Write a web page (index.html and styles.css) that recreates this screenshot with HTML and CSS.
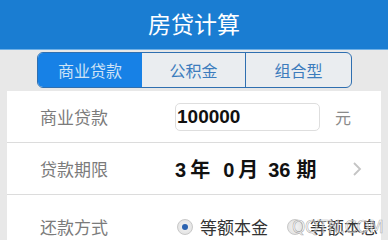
FILE: index.html
```html
<!DOCTYPE html>
<html lang="zh-CN">
<head>
<meta charset="utf-8">
<title>房贷计算</title>
<link rel="stylesheet" href="styles.css">
</head>
<body>
<header class="topbar"><h1 class="title">房贷计算</h1></header>
<nav class="tabs">
  <div class="tab tab-active">商业贷款</div>
  <div class="tab tab-mid">公积金</div>
  <div class="tab tab-last">组合型</div>
</nav>
<section class="card">
  <div class="row">
    <div class="label">商业贷款</div>
    <div class="value">
      <div class="input">100000</div>
      <span class="unit">元</span>
    </div>
  </div>
  <div class="row">
    <div class="label">贷款期限</div>
    <div class="value">
      <span class="term"><span class="n">3</span><span class="u u-year">年</span><span class="n">0</span><span class="u u-month">月</span><span class="n">36</span><span class="u u-period">期</span></span>
      <svg class="chev" width="10" height="16" viewBox="0 0 10 16"><polyline points="2,2 8,8 2,14" fill="none" stroke="#c4c4c4" stroke-width="1.8"/></svg>
    </div>
  </div>
  <div class="row row-last">
    <div class="label">还款方式</div>
    <div class="value radios">
      <span class="radio radio-on"></span><span class="opt">等额本金</span>
      <span class="radio radio-off"></span><span class="opt">等额本息</span>
    </div>
  </div>
</section>
<div class="watermark">QQTN.COM</div>
</body>
</html>
```
FILE: styles.css
```css
html, body { margin: 0; padding: 0; }
body {
  width: 388px;
  height: 240px;
  overflow: hidden;
  background: #e8e8e8;
  font-family: "Liberation Sans", "Noto Sans CJK SC", sans-serif;
  position: relative;
}
.topbar {
  height: 49px;
  background: #1a7dd2;
  border-bottom: 1px solid #6fb0e6;
  display: flex;
  align-items: center;
  justify-content: center;
}
.title {
  margin: 0;
  color: #fff;
  font-family: "Noto Sans CJK SC", sans-serif;
  font-weight: 400;
  font-size: 23px;
  line-height: 1;
  padding-bottom: 2px;
}
.tabs {
  display: flex;
  margin: 2px 0 0 37px;
  width: 313px;
  height: 34px;
  border: 1px solid #2f6fb0;
  border-radius: 6px;
  overflow: hidden;
  background: #eaedf0;
}
.tab {
  display: flex;
  align-items: center;
  justify-content: center;
  font-family: "Noto Sans CJK SC", sans-serif;
  font-size: 16px;
  color: #3c7cbd;
}
.tab-active {
  width: 104px;
  background: #1781e6;
  color: #cfe3f6;
}
.tab-mid {
  width: 103px;
  border-right: 1px solid #2f6fb0;
}
.tab-last { flex: 1; }
.card {
  margin: 3px 0 0 7px;
  width: 374px;
  background: #fff;
}
.row {
  height: 51px;
  border-bottom: 1px solid #dcdcdc;
  display: flex;
  align-items: center;
}
.row-last { border-bottom: 0; height: 45px; align-items: flex-start; }
.row-last .label, .row-last .value { margin-top: 19px; }
.label {
  width: 135px;
  padding-left: 33px;
  font-family: "Noto Sans CJK SC", sans-serif;
  font-size: 17px;
  color: #7b7b7b;
}
.value {
  display: flex;
  align-items: center;
  flex: 1;
}
.input {
  box-sizing: border-box;
  width: 145px;
  height: 28px;
  border: 1px solid #dedede;
  border-radius: 5px;
  padding-left: 1px;
  display: flex;
  align-items: center;
  font-weight: 700;
  font-size: 19px;
  color: #111;
}
.unit {
  margin-left: 15px;
  font-family: "Noto Sans CJK SC", sans-serif;
  font-size: 16px;
  color: #8a8a8a;
}
.term {
  display: flex;
  align-items: baseline;
  color: #111;
  font-weight: 700;
}
.term .n {
  font-family: "Liberation Sans", sans-serif;
  font-size: 20px;
}
.term .u {
  font-family: "Noto Sans CJK SC", sans-serif;
  font-size: 20px;
  margin-left: 4px;
}
.term .u-year { margin-right: 13px; }
.term .u-month { margin-right: 10px; }
.term .u-period { margin-left: 6px; }
.chev { margin-left: auto; margin-right: 19px; }
.radios { font-family: "Noto Sans CJK SC", sans-serif; }
.radio {
  width: 16px;
  height: 16px;
  border-radius: 50%;
  box-sizing: border-box;
  border: 1px solid #c8c8c8;
  background: radial-gradient(circle, #f4f4f4 0, #dedede 100%);
  display: inline-flex;
  align-items: center;
  justify-content: center;
  margin-left: 2px;
}
.radio-on::after {
  content: "";
  width: 6px;
  height: 6px;
  border-radius: 50%;
  background: #2a62b0;
}
.radio-off { margin-left: 19px; }
.opt {
  margin-left: 7px;
  font-size: 17px;
  color: #333;
}
.watermark {
  position: absolute;
  left: 292px;
  top: 217px;
  font-family: "DejaVu Sans", sans-serif;
  font-size: 17px;
  color: rgba(255,255,255,0.55);
  -webkit-text-stroke: 0.6px rgba(120,120,120,0.6);
  letter-spacing: -0.5px;
}
```
